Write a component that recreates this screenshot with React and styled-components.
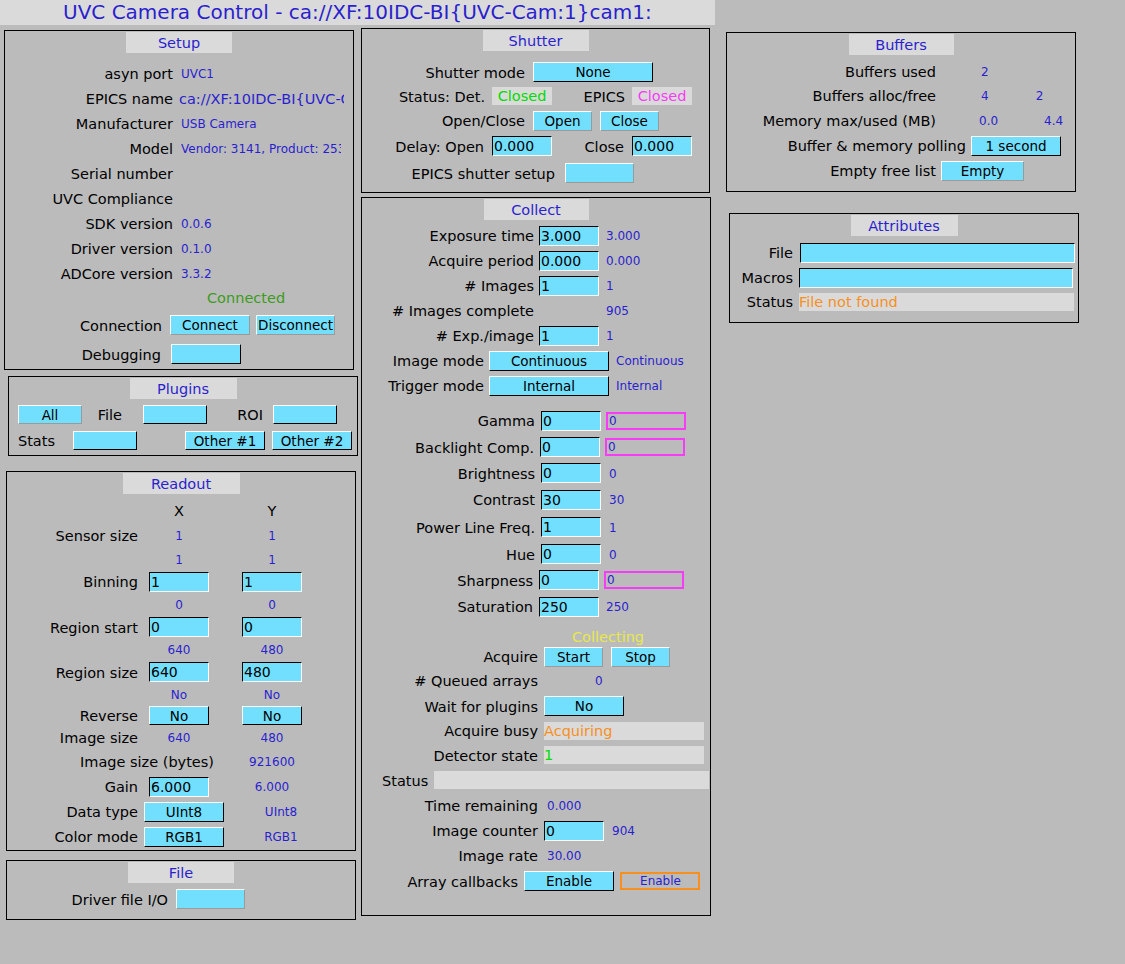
import React from 'react'
import styled, { createGlobalStyle } from 'styled-components'

const BLUE = '#2a1fcf'
const CYAN = '#73dfff'
const GRAY = '#dadada'
const GREEN = '#00dc00'
const MAGENTA = '#f73cf7'
const ORANGE = '#f7901e'

const GlobalStyle = createGlobalStyle`
  html, body {
    margin: 0;
    padding: 0;
    background: #bbbbbb;
  }
  body {
    font-family: "DejaVu Sans", "Liberation Sans", sans-serif;
    width: 1125px;
    height: 964px;
    overflow: hidden;
  }
`;

const Page = styled.div`
  width: 1125px;
  height: 964px;
  background: #bbbbbb;
  display: flex;
  flex-direction: column;
`;

const TitleBar = styled.div`
  width: 715px;
  height: 25px;
  box-sizing: border-box;
  padding-left: 63px;
  background: ${GRAY};
  color: ${BLUE};
  font-size: 20px;
  line-height: 25px;
  white-space: nowrap;
`;

const Columns = styled.div`
  display: flex;
  align-items: flex-start;
`;

const Column = styled.div`
  display: flex;
  flex-direction: column;
  flex-shrink: 0;
  width: ${p => p.$w}px;
`;

const Panel = styled.section`
  box-sizing: border-box;
  width: ${p => p.$w || 350}px;
  height: ${p => p.$h}px;
  margin-left: ${p => p.$ml || 0}px;
  margin-top: ${p => p.$mt || 0}px;
  border: 1px solid #000;
  display: flex;
  flex-direction: column;
`;

const PanelTitle = styled.div`
  align-self: center;
  box-sizing: border-box;
  width: ${p => p.$w}px;
  height: 21px;
  padding-top: 2px;
  margin-top: 1px;
  margin-bottom: ${p => p.$mb || 0}px;
  background: ${GRAY};
  color: ${BLUE};
  font-size: 14.5px;
  line-height: 19px;
  text-align: center;
  flex-shrink: 0;
`;

const Row = styled.div`
  display: flex;
  align-items: center;
  flex-shrink: 0;
  height: ${p => p.$h}px;
  margin-top: ${p => p.$mt || 0}px;
  white-space: nowrap;
`;

const Label = styled.span`
  flex-shrink: 0;
  display: block;
  width: ${p => (p.$w != null ? `${p.$w}px` : 'auto')};
  margin-left: ${p => p.$ml || 0}px;
  padding-top: 1px;
  text-align: ${p => p.$align || 'right'};
  font-size: 14.5px;
  color: ${p => p.$color || '#000'};
`;

const Read = styled.span`
  flex-shrink: 0;
  display: block;
  width: ${p => (p.$w != null ? `${p.$w}px` : 'auto')};
  margin-left: ${p => p.$ml || 0}px;
  padding-top: 1px;
  text-align: ${p => p.$align || 'left'};
  font-size: ${p => p.$size || 12}px;
  color: ${BLUE};
  overflow: hidden;
`;

const Entry = styled.div`
  flex-shrink: 0;
  box-sizing: border-box;
  width: ${p => p.$w}px;
  height: ${p => p.$h || 20}px;
  margin-left: ${p => p.$ml || 0}px;
  padding: 1px 0 0 1px;
  background: ${CYAN};
  border: 1px solid;
  border-color: #000 #fff #fff #000;
  font-size: 14px;
  line-height: ${p => (p.$h || 20) - 3}px;
  color: #000;
`;

const Btn = styled.div`
  flex-shrink: 0;
  box-sizing: border-box;
  width: ${p => p.$w}px;
  height: ${p => p.$h || 20}px;
  margin-left: ${p => p.$ml || 0}px;
  background: ${CYAN};
  border: 1px solid;
  border-color: ${p => (p.$menu ? '#fff #000 #000 #fff' : '#fff #9a9a9a #9a9a9a #fff')};
  display: flex;
  align-items: center;
  justify-content: center;
  font-size: 13.5px;
  color: #000;
`;

const Box = styled.div`
  flex-shrink: 0;
  box-sizing: border-box;
  width: ${p => p.$w}px;
  height: 18px;
  margin-left: ${p => p.$ml || 0}px;
  padding-top: 1px;
  background: ${GRAY};
  color: ${p => p.$color || '#000'};
  font-size: 14.5px;
  line-height: 17px;
  text-align: ${p => p.$align || 'left'};
`;

const Ring = styled.div`
  flex-shrink: 0;
  box-sizing: border-box;
  width: 80px;
  height: 18px;
  margin-left: ${p => p.$ml || 0}px;
  padding: 1px 0 0 1px;
  border: 2px solid ${p => p.$color};
  color: ${BLUE};
  font-size: 12px;
  line-height: 13px;
  text-align: ${p => p.$align || 'left'};
`;

const setupInfo = [
  ['asyn port', 'UVC1'],
  ['EPICS name', 'ca://XF:10IDC-BI{UVC-Cam:1}cam1:', 14.5, 6, 165],
  ['Manufacturer', 'USB Camera'],
  ['Model', 'Vendor: 3141, Product: 25344', 12, 8, 160],
  ['Serial number', ''],
  ['UVC Compliance', ''],
  ['SDK version', '0.0.6'],
  ['Driver version', '0.1.0'],
  ['ADCore version', '3.3.2'],
];

function Setup() {
  return (
    <Panel $h={340} $ml={4} $mt={5}>
      <PanelTitle $w={106} $mb={8}>Setup</PanelTitle>
      {setupInfo.map(([label, value, size = 12, ml = 8, w = 163]) => (
        <Row key={label} $h={25}>
          <Label $w={168}>{label}</Label>
          <Read $ml={ml} $w={w} $size={size}>{value}</Read>
        </Row>
      ))}
      <Row $h={23}>
        <Label $ml={202} $align="left" $color="#3c9c1c">Connected</Label>
      </Row>
      <Row $h={32}>
        <Label $w={157}>Connection</Label>
        <Btn $ml={8} $w={80}>Connect</Btn>
        <Btn $ml={6} $w={79}>Disconnect</Btn>
      </Row>
      <Row $h={26}>
        <Label $w={156}>Debugging</Label>
        <Btn $menu $ml={10} $w={70} />
      </Row>
    </Panel>
  );
}

function Plugins() {
  return (
    <Panel $h={80} $ml={8} $mt={6}>
      <PanelTitle $w={107}>Plugins</PanelTitle>
      <Row $h={19} $mt={6}>
        <Btn $ml={9} $w={64} $h={19}>All</Btn>
        <Label $w={40}>File</Label>
        <Btn $menu $ml={21} $w={64} $h={19} />
        <Label $w={56}>ROI</Label>
        <Btn $menu $ml={10} $w={64} $h={19} />
      </Row>
      <Row $h={19} $mt={7}>
        <Label $w={46}>Stats</Label>
        <Btn $menu $ml={18} $w={64} $h={19} />
        <Btn $menu $ml={48} $w={80} $h={19}>Other #1</Btn>
        <Btn $menu $ml={7} $w={80} $h={19}>Other #2</Btn>
      </Row>
    </Panel>
  );
}

function Pair({ h, label, x, y, kind }) {
  return (
    <Row $h={h}>
      <Label $w={131}>{label}</Label>
      {kind === 'entry' && (
        <>
          <Entry $ml={11} $w={60}>{x}</Entry>
          <Entry $ml={33} $w={60}>{y}</Entry>
        </>
      )}
      {kind === 'menu' && (
        <>
          <Btn $menu $ml={11} $w={60} $h={19}>{x}</Btn>
          <Btn $menu $ml={33} $w={60} $h={19}>{y}</Btn>
        </>
      )}
      {kind === 'read' && (
        <>
          <Read $ml={11} $w={60} $align="center">{x}</Read>
          <Read $ml={33} $w={60} $align="center">{y}</Read>
        </>
      )}
    </Row>
  );
}

function Readout() {
  return (
    <Panel $h={380} $ml={6} $mt={15}>
      <PanelTitle $w={117} $mb={4}>Readout</PanelTitle>
      <Row $h={25}>
        <Label $w={131} />
        <Label $ml={11} $w={60} $align="center">X</Label>
        <Label $ml={33} $w={60} $align="center">Y</Label>
      </Row>
      <Pair h={25} label="Sensor size" x="1" y="1" kind="read" />
      <Pair h={22} x="1" y="1" kind="read" />
      <Pair h={23} label="Binning" x="1" y="1" kind="entry" />
      <Pair h={23} x="0" y="0" kind="read" />
      <Pair h={22} label="Region start" x="0" y="0" kind="entry" />
      <Pair h={23} x="640" y="480" kind="read" />
      <Pair h={22} label="Region size" x="640" y="480" kind="entry" />
      <Pair h={22} x="No" y="No" kind="read" />
      <Pair h={21} label="Reverse" x="No" y="No" kind="menu" />
      <Pair h={23} label="Image size" x="640" y="480" kind="read" />
      <Row $h={25}>
        <Label $w={207}>Image size (bytes)</Label>
        <Read $ml={28} $w={60} $align="center">921600</Read>
      </Row>
      <Row $h={25}>
        <Label $w={131}>Gain</Label>
        <Entry $ml={11} $w={60}>6.000</Entry>
        <Read $ml={33} $w={60} $align="center">6.000</Read>
      </Row>
      <Row $h={25}>
        <Label $w={131}>Data type</Label>
        <Btn $menu $ml={6} $w={80}>UInt8</Btn>
        <Read $ml={17} $w={80} $align="center">UInt8</Read>
      </Row>
      <Row $h={25}>
        <Label $w={131}>Color mode</Label>
        <Btn $menu $ml={6} $w={80}>RGB1</Btn>
        <Read $ml={17} $w={80} $align="center">RGB1</Read>
      </Row>
    </Panel>
  );
}

function FilePanel() {
  return (
    <Panel $h={60} $ml={6} $mt={9}>
      <PanelTitle $w={106}>File</PanelTitle>
      <Row $h={20} $mt={6}>
        <Label $w={161}>Driver file I/O</Label>
        <Btn $ml={8} $w={69} />
      </Row>
    </Panel>
  );
}

function Shutter() {
  return (
    <Panel $w={349} $h={165} $mt={3}>
      <PanelTitle $w={106} $mb={9}>Shutter</PanelTitle>
      <Row $h={24}>
        <Label $w={163}>Shutter mode</Label>
        <Btn $menu $ml={8} $w={120}>None</Btn>
      </Row>
      <Row $h={24}>
        <Label $w={123}>Status: Det.</Label>
        <Box $ml={7} $w={60} $color={GREEN} $align="center">Closed</Box>
        <Label $w={73}>EPICS</Label>
        <Box $ml={7} $w={60} $color={MAGENTA} $align="center">Closed</Box>
      </Row>
      <Row $h={25}>
        <Label $w={163}>Open/Close</Label>
        <Btn $ml={8} $w={59}>Open</Btn>
        <Btn $ml={8} $w={59}>Close</Btn>
      </Row>
      <Row $h={26}>
        <Label $w={122}>Delay: Open</Label>
        <Entry $ml={8} $w={60}>0.000</Entry>
        <Label $w={72}>Close</Label>
        <Entry $ml={8} $w={60}>0.000</Entry>
      </Row>
      <Row $h={28}>
        <Label $w={193}>EPICS shutter setup</Label>
        <Btn $ml={10} $w={69} />
      </Row>
    </Panel>
  );
}

function Setting({ h, lw, label, value, rb, ring, fml = 6, rml = 8 }) {
  return (
    <Row $h={h}>
      <Label $w={lw}>{label}</Label>
      <Entry $ml={fml} $w={60}>{value}</Entry>
      {ring ? <Ring $ml={5} $color={MAGENTA}>{rb}</Ring> : <Read $ml={rml}>{rb}</Read>}
    </Row>
  );
}

function Collect() {
  return (
    <Panel $h={719} $mt={4}>
      <PanelTitle $w={105} $mb={3}>Collect</PanelTitle>
      <Setting h={25} lw={172} label="Exposure time" value="3.000" rb="3.000" fml={5} rml={7} />
      <Setting h={25} lw={172} label="Acquire period" value="0.000" rb="0.000" fml={5} rml={7} />
      <Setting h={25} lw={172} label="# Images" value="1" rb="1" fml={5} rml={7} />
      <Row $h={25}>
        <Label $w={172}>{'# Images complete'}</Label>
        <Read $ml={72}>905</Read>
      </Row>
      <Setting h={25} lw={172} label="# Exp./image" value="1" rb="1" fml={5} rml={7} />
      <Row $h={25}>
        <Label $w={122}>Image mode</Label>
        <Btn $menu $ml={5} $w={120}>Continuous</Btn>
        <Read $ml={7}>Continuous</Read>
      </Row>
      <Row $h={25}>
        <Label $w={122}>Trigger mode</Label>
        <Btn $menu $ml={5} $w={120}>Internal</Btn>
        <Read $ml={7}>Internal</Read>
      </Row>
      <Row $h={27} $mt={9}>
        <Label $w={173}>Gamma</Label>
        <Entry $ml={6} $w={60}>0</Entry>
        <Ring $ml={5} $color={MAGENTA}>0</Ring>
      </Row>
      <Row $h={26}>
        <Label $w={172}>Backlight Comp.</Label>
        <Entry $ml={6} $w={60}>0</Entry>
        <Ring $ml={5} $color={MAGENTA}>0</Ring>
      </Row>
      <Setting h={26} lw={173} label="Brightness" value="0" rb="0" />
      <Setting h={27} lw={173} label="Contrast" value="30" rb="30" />
      <Setting h={28} lw={173} label="Power Line Freq." value="1" rb="1" />
      <Setting h={26} lw={173} label="Hue" value="0" rb="0" />
      <Setting h={26} lw={171} label="Sharpness" value="0" rb="0" ring />
      <Setting h={27} lw={171} label="Saturation" value="250" rb="250" rml={7} />
      <Row $h={19} $mt={7}>
        <Label $ml={210} $align="left" $color="#e8e84a">Collecting</Label>
      </Row>
      <Row $h={21}>
        <Label $w={176}>Acquire</Label>
        <Btn $ml={6} $w={59}>Start</Btn>
        <Btn $ml={8} $w={59}>Stop</Btn>
      </Row>
      <Row $h={27}>
        <Label $w={176}>{'# Queued arrays'}</Label>
        <Read $ml={57}>0</Read>
      </Row>
      <Row $h={24}>
        <Label $w={176}>Wait for plugins</Label>
        <Btn $menu $ml={6} $w={80}>No</Btn>
      </Row>
      <Row $h={25}>
        <Label $w={176}>Acquire busy</Label>
        <Box $ml={6} $w={160} $color={ORANGE}>Acquiring</Box>
      </Row>
      <Row $h={24}>
        <Label $w={176}>Detector state</Label>
        <Box $ml={6} $w={160} $color={GREEN}>1</Box>
      </Row>
      <Row $h={26}>
        <Label $ml={20} $align="left">Status</Label>
        <Box $ml={6} $w={275} />
      </Row>
      <Row $h={25}>
        <Label $w={176}>Time remaining</Label>
        <Read $ml={9}>0.000</Read>
      </Row>
      <Row $h={25}>
        <Label $w={176}>Image counter</Label>
        <Entry $ml={6} $w={60}>0</Entry>
        <Read $ml={8}>904</Read>
      </Row>
      <Row $h={25}>
        <Label $w={176}>Image rate</Label>
        <Read $ml={9}>30.00</Read>
      </Row>
      <Row $h={26}>
        <Label $w={156}>Array callbacks</Label>
        <Btn $menu $ml={6} $w={90}>Enable</Btn>
        <Ring $ml={6} $color={ORANGE} $align="center">Enable</Ring>
      </Row>
    </Panel>
  );
}

function Buffers() {
  return (
    <Panel $h={160} $mt={7}>
      <PanelTitle $w={105} $mb={4}>Buffers</PanelTitle>
      <Row $h={24}>
        <Label $w={209}>Buffers used</Label>
        <Read $ml={45}>2</Read>
      </Row>
      <Row $h={25}>
        <Label $w={209}>Buffers alloc/free</Label>
        <Read $ml={45}>4</Read>
        <Read $ml={47}>2</Read>
      </Row>
      <Row $h={25}>
        <Label $w={209}>Memory max/used (MB)</Label>
        <Read $ml={43}>0.0</Read>
        <Read $ml={46}>4.4</Read>
      </Row>
      <Row $h={25}>
        <Label $w={239}>Buffer &amp; memory polling</Label>
        <Btn $menu $ml={5} $w={90}>1 second</Btn>
      </Row>
      <Row $h={25}>
        <Label $w={209}>Empty free list</Label>
        <Btn $ml={5} $w={83}>Empty</Btn>
      </Row>
    </Panel>
  );
}

function Attributes() {
  return (
    <Panel $h={110} $ml={3} $mt={21}>
      <PanelTitle $w={107} $mb={4}>Attributes</PanelTitle>
      <Row $h={25}>
        <Label $w={63}>File</Label>
        <Entry $ml={7} $w={275} />
      </Row>
      <Row $h={25}>
        <Label $w={63}>Macros</Label>
        <Entry $ml={6} $w={274} />
      </Row>
      <Row $h={23}>
        <Label $w={63}>Status</Label>
        <Box $ml={6} $w={275} $color={ORANGE}>File not found</Box>
      </Row>
    </Panel>
  );
}

export default function App() {
  return (
    <Page>
      <GlobalStyle />
      <TitleBar>{'UVC Camera Control - ca://XF:10IDC-BI{UVC-Cam:1}cam1:'}</TitleBar>
      <Columns>
        <Column $w={361}>
          <Setup />
          <Plugins />
          <Readout />
          <FilePanel />
        </Column>
        <Column $w={365}>
          <Shutter />
          <Collect />
        </Column>
        <Column $w={360}>
          <Buffers />
          <Attributes />
        </Column>
      </Columns>
    </Page>
  );
}
